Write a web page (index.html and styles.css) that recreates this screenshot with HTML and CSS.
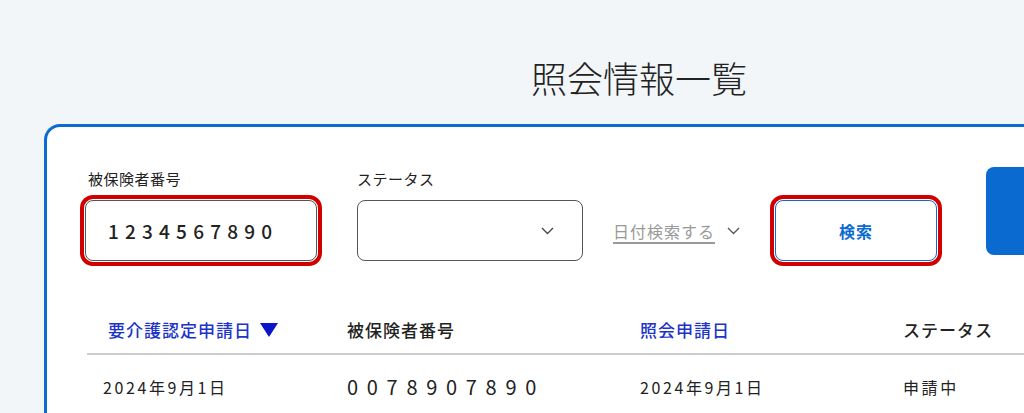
FILE: index.html
```html
<!DOCTYPE html>
<html lang="ja">
<head>
    <meta charset="UTF-8">
    <meta name="viewport" content="width=device-width, initial-scale=1.0">
    <title>照会情報一覧</title>
    <link rel="stylesheet" href="styles.css">
</head>
<body>
    <div class="page">
        <h1 class="page-title">照会情報一覧</h1>

        <div class="inquiry-card">
            <div class="search-row">
                <div class="field field-number">
                    <label class="field-label">被保険者番号</label>
                    <div class="field-box highlighted">1234567890</div>
                </div>

                <div class="field field-status">
                    <label class="field-label">ステータス</label>
                    <div class="field-box select-box">
                        <svg class="chevron" width="13" height="8" viewBox="0 0 13 8">
                            <polyline points="1,1 6.5,6.5 12,1" fill="none" stroke="#444" stroke-width="1.3"/>
                        </svg>
                    </div>
                </div>

                <div class="date-toggle">
                    <span class="date-link">日付検索する</span>
                    <svg class="chevron" width="13" height="8" viewBox="0 0 13 8">
                        <polyline points="1,1 6.5,6.5 12,1" fill="none" stroke="#555" stroke-width="1.3"/>
                    </svg>
                </div>

                <button class="search-button highlighted">検索</button>

                <button class="primary-button"></button>
            </div>

            <div class="result-table">
                <div class="cell head head-first sortable">要介護認定申請日
                    <svg class="sort-icon" width="18" height="14" viewBox="0 0 18 14">
                        <polygon points="0,0 18,0 9,14" fill="#0a14c8"/>
                    </svg>
                </div>
                <div class="cell head">被保険者番号</div>
                <div class="cell head sortable">照会申請日</div>
                <div class="cell head">ステータス</div>

                <div class="cell first">2024年9月1日</div>
                <div class="cell number">0078907890</div>
                <div class="cell">2024年9月1日</div>
                <div class="cell">申請中</div>
            </div>
        </div>
    </div>
</body>
</html>
```

FILE: styles.css
```css
body {
    margin: 0;
    background-color: #f3f6f9;
    font-family: "Noto Sans CJK JP", "Noto Sans", sans-serif;
    color: #222;
    overflow: hidden;
}

.page {
    width: 1278px;
}

.page-title {
    margin: 0;
    padding-top: 55px;
    font-size: 36px;
    font-weight: 300;
    line-height: 44px;
    text-align: center;
    color: #222;
}

.inquiry-card {
    margin: 25px 0 0 44px;
    height: 400px;
    background-color: #fff;
    border: 3px solid #0b6bd0;
    border-right: none;
    border-radius: 16px 0 0 0;
    padding: 42px 0 0 38px;
}

.search-row {
    display: flex;
    align-items: flex-start;
}

.field-label {
    display: block;
    font-size: 15px;
    line-height: 20px;
    letter-spacing: 0.5px;
    color: #222;
}

.field-number .field-label {
    padding-left: 3px;
}

.field-box {
    margin-top: 11px;
    height: 59px;
    border: 1px solid #555;
    border-radius: 8px;
    box-sizing: content-box;
}

.field-number .field-box {
    width: 208px;
    padding-left: 22px;
    font-size: 19px;
    font-weight: 500;
    letter-spacing: 6.2px;
    line-height: 59px;
}

.highlighted {
    outline: 4px solid #d00000;
    outline-offset: 1px;
}

.field-status {
    margin-left: 40px;
}

.select-box {
    width: 224px;
    display: flex;
    justify-content: flex-end;
    align-items: center;
}

.select-box .chevron {
    margin-right: 28px;
}

.date-toggle {
    display: flex;
    align-items: center;
    margin: 31px 0 0 30px;
    height: 61px;
}

.date-link {
    font-size: 16px;
    letter-spacing: 1px;
    color: #999;
    text-decoration: underline;
    text-decoration-thickness: 2px;
    text-underline-offset: 4px;
}

.date-toggle .chevron {
    margin-left: 12px;
}

.search-button {
    margin: 31px 0 0 35px;
    width: 162px;
    height: 61px;
    background-color: #fff;
    border: 1px solid #0b6bd0;
    border-radius: 8px;
    color: #0b6bd0;
    font-family: inherit;
    font-size: 16px;
    font-weight: 700;
    letter-spacing: 1px;
}

.primary-button {
    margin: -2px 0 0 49px;
    width: 200px;
    height: 88px;
    background-color: #0a6ad0;
    border: none;
    border-radius: 8px;
}

.result-table {
    display: grid;
    grid-template-columns: 260px 293px 263px 240px;
    margin: 58px 0 0 2px;
}

.cell {
    font-size: 16px;
    letter-spacing: 1.8px;
    line-height: 22px;
    white-space: nowrap;
}

.head {
    padding-bottom: 12px;
    border-bottom: 2px solid #cdcdcd;
    display: flex;
    align-items: center;
    font-size: 17px;
    font-weight: 500;
    letter-spacing: 1px;
}

.head-first {
    padding-left: 21px;
}

.sortable {
    color: #1c34c8;
}

.sort-icon {
    margin-left: 8px;
}

.cell:not(.head) {
    padding-top: 21px;
    letter-spacing: 2.6px;
}

.first {
    padding-left: 16px;
}

.cell.number {
    font-size: 20px;
    letter-spacing: 8.7px;
}
```
